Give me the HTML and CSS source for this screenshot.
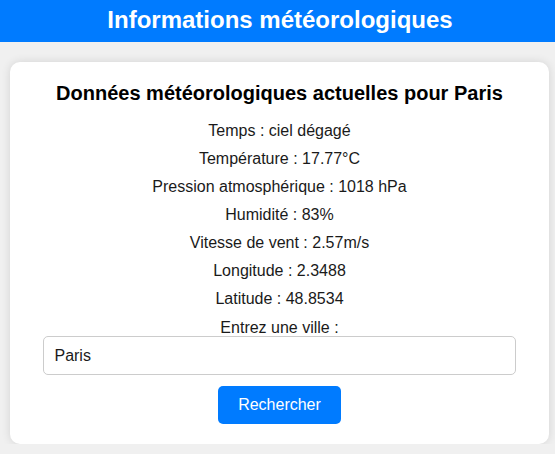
FILE: index.html
```html
<!DOCTYPE html>
<html lang="fr">
<head>
<meta charset="utf-8">
<title>Informations météorologiques</title>
<link rel="stylesheet" href="styles.css">
</head>
<body>
<header class="topbar">
  <h1 class="topbar-title">Informations météorologiques</h1>
</header>
<main class="card">
  <h3 class="card-title">Données météorologiques actuelles pour Paris</h3>
  <p class="info">Temps : ciel dégagé</p>
  <p class="info">Température : 17.77°C</p>
  <p class="info">Pression atmosphérique : 1018 hPa</p>
  <p class="info">Humidité : 83%</p>
  <p class="info">Vitesse de vent : 2.57m/s</p>
  <p class="info">Longitude : 2.3488</p>
  <p class="info">Latitude : 48.8534</p>
  <form class="search">
    <label class="search-label" for="city">Entrez une ville :</label>
    <input class="search-input" id="city" type="text" value="Paris">
    <button class="search-button" type="button">Rechercher</button>
  </form>
</main>
</body>
</html>
```
FILE: styles.css
```css
html, body {
  margin: 0;
  padding: 0;
}
body {
  background: #f0f0f0;
  font-family: "Liberation Sans", Arial, sans-serif;
  color: #1a1a1a;
}
.topbar {
  background: #007bff;
  height: 42px;
  display: flex;
  align-items: center;
  justify-content: center;
}
.topbar-title {
  margin: 0;
  color: #fff;
  font-size: 24px;
  font-weight: bold;
  line-height: 28px;
  padding-left: 5px;
  margin-top: -2px;
}
.card {
  background: #fff;
  margin: 20px 6px 0 10px;
  padding: 20px 20px 20px;
  border-radius: 10px;
  box-shadow: 0 0 10px rgba(0, 0, 0, 0.12);
  text-align: center;
}
.card-title {
  margin: 0 0 17px;
  font-size: 20px;
  line-height: 23px;
  font-weight: bold;
  color: #000;
}
.info {
  margin: 10px 0;
  font-size: 16px;
  line-height: 18px;
}
.search {
  display: flex;
  flex-direction: column;
  align-items: center;
}
.search-label {
  display: block;
  font-size: 16px;
  line-height: 18px;
  margin-top: 1px;
  margin-bottom: -1px;
}
.search-input {
  box-sizing: border-box;
  width: 94.6%;
  height: 39px;
  padding: 0 10px;
  border: 1px solid #ccc;
  border-radius: 5px;
  font-family: "Liberation Sans", Arial, sans-serif;
  font-size: 16px;
  color: #1a1a1a;
  outline: none;
}
.search-button {
  margin-top: 11px;
  height: 38px;
  padding: 0 20px;
  background: #007bff;
  color: #fff;
  border: none;
  border-radius: 5px;
  font-family: "Liberation Sans", Arial, sans-serif;
  font-size: 16px;
}
```
